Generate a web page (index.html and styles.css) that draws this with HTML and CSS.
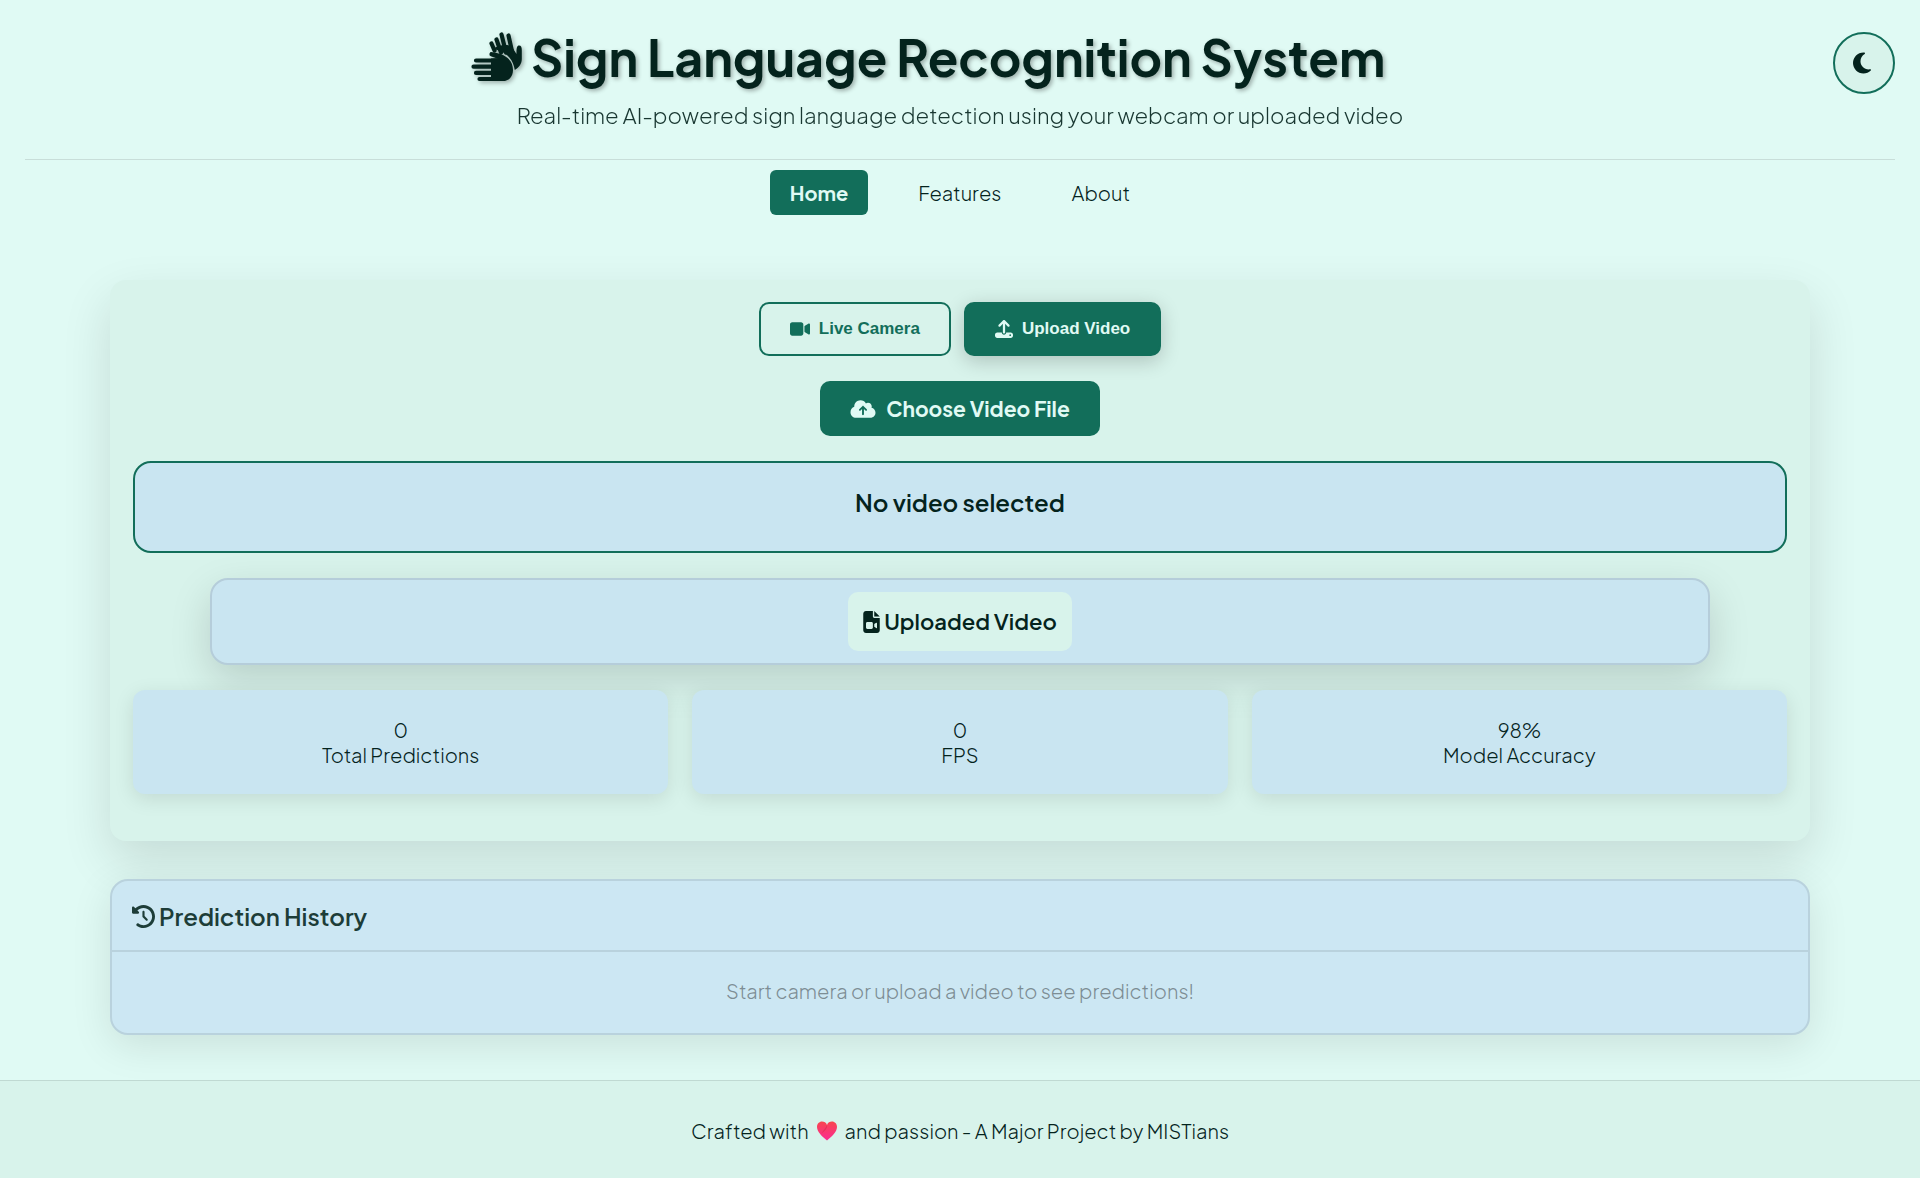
FILE: index.html
```html
<!DOCTYPE html>
<html lang="en">
<head>
<meta charset="utf-8">
<meta name="viewport" content="width=device-width, initial-scale=1">
<title>Sign Language Recognition System</title>
<link rel="stylesheet" href="styles.css">
</head>
<body>
<header class="header">
  <div class="brand">
    <h1 class="title">
      <svg class="icon-hands" viewBox="0 0 52 52" aria-hidden="true">
        <g fill="none" stroke="currentColor" stroke-linecap="round" stroke-width="4.200">
          <path d="M20.500 12.500l3 7M25.500 8.500l4.500 13M30.500 3.500l4.500 18M37.500 4.500l4 18"/>
          <path d="M5 29.500h20M2.500 35.700h20M5 41.900h20M8.500 48h20"/>
          <path d="M20.500 23.200l7 2.500"/>
        </g>
        <path fill="currentColor" d="M21 21.200c10 .8 21 5.800 21 17.800 0 7-4.500 11.100-10 11.100H20V27.500l8-.5z"/>
        <path fill="currentColor" d="M22 18c4-3 14-6 19-2l4.500 7c-.2-5 .2-8.500 2.500-8.500s2.800 2 2.800 4.500v9c0 5-3 8.500-7 11C42 27 34 20 22 18z"/>
      </svg>
      <span>Sign Language Recognition System</span>
    </h1>
    <p class="subtitle">Real-time AI-powered sign language detection using your webcam or uploaded video</p>
  </div>
  <button class="theme-toggle" type="button" aria-label="Toggle dark mode">
    <svg class="icon-moon" viewBox="0 0 384 512" aria-hidden="true"><path fill="currentColor" d="M223.500 32C100 32 0 132.300 0 256S100 480 223.500 480c60.600 0 115.500-24.200 155.800-63.400c5-4.900 6.300-12.500 3.100-18.700s-10.100-9.700-17-8.500c-9.800 1.700-19.800 2.600-30.100 2.600c-96.900 0-175.500-78.800-175.500-176c0-65.800 36-123.100 89.300-153.300c6.100-3.500 9.200-10.500 7.700-17.300s-7.300-11.900-14.300-12.500c-6.300-.5-12.600-.8-19-.8z"/></svg>
  </button>
</header>
<nav class="nav" aria-label="Main">
  <a class="nav-link active" href="#home">Home</a>
  <a class="nav-link" href="#features">Features</a>
  <a class="nav-link" href="#about">About</a>
</nav>
<main class="main">
  <section class="panel">
    <div class="modes">
      <button class="mode" type="button"><svg class="icon-video" viewBox="0 0 576 512" aria-hidden="true"><path fill="currentColor" d="M0 128C0 92.700 28.700 64 64 64H320c35.300 0 64 28.700 64 64V384c0 35.300-28.700 64-64 64H64c-35.300 0-64-28.700-64-64V128zM559.100 99.800c10.400 5.600 16.900 16.400 16.900 28.200V384c0 11.800-6.500 22.600-16.900 28.200s-23 5-32.900-1.600l-96-64L416 337.100V174.900l14.200-9.500 96-64c9.800-6.500 22.400-7.200 32.900-1.600z"/></svg>Live Camera</button>
      <button class="mode selected" type="button"><svg class="icon-upload" viewBox="0 0 512 512" aria-hidden="true"><path fill="currentColor" fill-rule="evenodd" d="M288 109.300V352c0 17.700-14.300 32-32 32s-32-14.300-32-32V109.300l-73.400 73.400c-12.500 12.500-32.800 12.500-45.300 0s-12.500-32.800 0-45.300l128-128c12.500-12.500 32.800-12.500 45.300 0l128 128c12.500 12.500 12.500 32.800 0 45.300s-32.800 12.500-45.300 0zM64 352h128c0 35.300 28.700 64 64 64s64-28.700 64-64h128c35.300 0 64 28.700 64 64v32c0 35.300-28.700 64-64 64H64c-35.300 0-64-28.700-64-64v-32c0-35.300 28.700-64 64-64zM432 456a24 24 0 1 0 0-48 24 24 0 1 0 0 48z"/></svg>Upload Video</button>
    </div>
    <button class="choose" type="button"><svg class="icon-cloud" viewBox="0 0 640 512" aria-hidden="true"><path fill="currentColor" fill-rule="evenodd" d="M144 480C64.500 480 0 415.500 0 336c0-62.800 40.200-116.200 96.200-135.900c-.1-2.700-.2-5.400-.2-8.100c0-88.400 71.600-160 160-160c59.300 0 111 32.200 138.700 80.200C409.900 102 428.300 96 448 96c53 0 96 43 96 96c0 12.200-2.300 23.800-6.400 34.600C596 238.400 640 290.100 640 352c0 70.700-57.300 128-128 128H144zm79-217c-9.400 9.400-9.400 24.600 0 33.900s24.600 9.400 33.900 0l39-39V392c0 13.300 10.700 24 24 24s24-10.700 24-24V257.900l39 39c9.400 9.400 24.600 9.400 33.900 0s9.400-24.600 0-33.900l-80-80c-9.400-9.400-24.600-9.400-33.900 0l-80 80z"/></svg>Choose Video File</button>
    <div class="status">No video selected</div>
    <div class="preview">
      <h2 class="preview-label"><svg class="icon-file" viewBox="0 0 384 512" aria-hidden="true"><path fill="currentColor" fill-rule="evenodd" d="M64 0C28.700 0 0 28.700 0 64V448c0 35.300 28.700 64 64 64H320c35.300 0 64-28.700 64-64V160H256c-17.700 0-32-14.300-32-32V0zM256 0V128H384zM64 288c0-17.700 14.300-32 32-32h96c17.700 0 32 14.300 32 32v96c0 17.700-14.300 32-32 32H96c-17.700 0-32-14.300-32-32zM300.900 397.900L256 368V304l44.900-29.900c2-1.300 4.400-2.100 6.800-2.100c6.800 0 12.300 5.500 12.300 12.300V387.700c0 6.800-5.500 12.300-12.300 12.300c-2.400 0-4.800-.7-6.800-2.100z"/></svg>Uploaded Video</h2>
    </div>
    <div class="stats">
      <div class="stat"><div>0</div><div>Total Predictions</div></div>
      <div class="stat"><div>0</div><div>FPS</div></div>
      <div class="stat"><div>98%</div><div>Model Accuracy</div></div>
    </div>
  </section>
  <section class="history">
    <h2 class="history-title"><svg class="icon-history" viewBox="0 0 512 512" aria-hidden="true"><path fill="currentColor" d="M75 75L41 41C25.900 25.900 0 36.600 0 57.900V168c0 13.300 10.700 24 24 24H134.100c21.400 0 32.100-25.900 17-41l-30.800-30.800C155 85.500 203 64 256 64c106 0 192 86 192 192s-86 192-192 192c-40.800 0-78.600-12.700-109.700-34.400c-14.500-10.100-34.400-6.600-44.600 7.900s-6.600 34.400 7.900 44.600C151.200 495 201.700 512 256 512c141.400 0 256-114.600 256-256S397.400 0 256 0C185.300 0 121.300 28.700 75 75zm181 53c-13.300 0-24 10.700-24 24V256c0 6.400 2.500 12.500 7 17l72 72c9.400 9.400 24.600 9.400 33.900 0s9.400-24.600 0-33.900l-65-65V152c0-13.300-10.700-24-24-24z"/></svg>Prediction History</h2>
    <p class="history-empty">Start camera or upload a video to see predictions!</p>
  </section>
</main>
<footer class="footer">
  <p class="credit">Crafted with
    <svg class="icon-heart" viewBox="0 0 18 18" role="img" aria-label="love">
      <defs><linearGradient id="love" x1="0" y1="0" x2="0" y2="1"><stop offset="0" stop-color="#f8454f"/><stop offset="1" stop-color="#fb2c92"/></linearGradient></defs>
      <path fill="url(#love)" d="M9 17.500C5 14.500 0 10 0 5.500 0 2.500 2 .5 4.500.5 6.500.5 8.200 1.500 9 3.500 9.800 1.500 11.500.5 13.500.5 16 .5 18 2.500 18 5.500 18 10 13 14.500 9 17.500z"/>
      <path fill="#d92a4e" opacity=".6" d="M9 3.500C9.800 6 7 9 4 11 6 8 8 6 9 3.500z"/>
    </svg>
    and passion - A Major Project by MISTians</p>
</footer>
</body>
</html>
```
FILE: styles.css
```css
:root {
  --bg: #e0faf4;
  --panel: #d8f3eb;
  --box: #c9e5f1;
  --green: #126e5a;
  --ink: #04231d;
  --line: #b5cdda;
}

* { box-sizing: border-box; }

body {
  margin: 0;
  min-height: 100vh;
  display: flex;
  flex-direction: column;
  background: var(--bg);
  color: var(--ink);
  font-family: "Plus Jakarta Sans", Inter, sans-serif;
  font-size: 20px;
  font-weight: 300;
  line-height: 25px;
}

h1, h2, p { margin: 0; }

button { font-family: inherit; cursor: pointer; }

svg { flex: none; }

.header {
  position: relative;
  margin: 0 25px;
  padding: 25px 0 30px;
  border-bottom: 1px solid #c8ded9;
  display: flex;
  justify-content: center;
}

.brand { display: flex; flex-direction: column; }

.title {
  display: flex;
  align-items: center;
  gap: 8px;
  align-self: center;
  margin-right: 64px;
  font-size: 50px;
  font-weight: 700;
  line-height: 64px;
  text-shadow: 2px 2px 4px rgba(0, 0, 0, 0.3);
}

.icon-hands {
  width: 52px;
  height: 52px;
  filter: drop-shadow(2px 2px 2px rgba(0, 0, 0, 0.3));
}

.subtitle {
  margin-top: 12px;
  font-size: 22px;
  line-height: 28px;
  text-align: center;
  opacity: 0.9;
}

.theme-toggle {
  position: absolute;
  top: 32px;
  right: 0;
  width: 62px;
  height: 62px;
  display: flex;
  align-items: center;
  padding: 0 0 0 18px;
  border: 2px solid var(--green);
  border-radius: 50%;
  background: var(--panel);
  color: var(--ink);
}

.icon-moon { width: 18px; height: 24px; }

.nav {
  display: flex;
  justify-content: center;
  gap: 30px;
  padding: 10px 20px;
}

.nav-link {
  padding: 10px 20px;
  border-radius: 6px;
  color: var(--ink);
  text-decoration: none;
}

.nav-link.active {
  background: var(--green);
  color: var(--bg);
  font-weight: 700;
}

.main {
  width: 100%;
  max-width: 1740px;
  margin: 0 auto;
  padding: 55px 20px 45px;
}

.panel {
  display: flex;
  flex-direction: column;
  align-items: center;
  gap: 25px;
  padding: 22px 23px 47px;
  border-radius: 16px;
  background: var(--panel);
  box-shadow: 0 20px 50px rgba(0, 0, 0, 0.12);
}

.modes { display: flex; gap: 13px; }

.mode {
  display: flex;
  align-items: center;
  gap: 9px;
  height: 54px;
  padding: 0 29px;
  border: 2px solid var(--green);
  border-radius: 10px;
  background: transparent;
  color: var(--green);
  font: 700 17px/20px "Liberation Sans", Arial, sans-serif;
}

.mode.selected {
  background: var(--green);
  color: var(--bg);
  box-shadow: 0 5px 20px rgba(0, 0, 0, 0.2);
}

.icon-video { width: 20px; height: 18px; }
.icon-upload { width: 18px; height: 18px; }
.icon-cloud { width: 26px; height: 20px; }
.icon-file { width: 17px; height: 22px; }
.icon-history { width: 23px; height: 23px; }

.choose {
  display: flex;
  align-items: center;
  gap: 10px;
  height: 55px;
  padding: 0 30px;
  border: 0;
  border-radius: 10px;
  background: var(--green);
  color: var(--bg);
  font-size: 21px;
  font-weight: 700;
}

.status {
  align-self: stretch;
  padding: 25px 20px 35px;
  border: 2px solid var(--green);
  border-radius: 18px;
  background: var(--box);
  font-size: 24px;
  font-weight: 600;
  line-height: 28px;
  text-align: center;
}

.preview {
  width: 100%;
  max-width: 1500px;
  display: flex;
  justify-content: center;
  padding: 12px;
  border: 2px solid var(--line);
  border-radius: 18px;
  background: var(--box);
  box-shadow: 0 15px 40px rgba(0, 0, 0, 0.15);
}

.preview-label {
  display: flex;
  align-items: center;
  gap: 4px;
  padding: 15px;
  border-radius: 10px;
  background: var(--panel);
  font-size: 22px;
  font-weight: 600;
  line-height: 29px;
}

.stats {
  align-self: stretch;
  display: grid;
  grid-template-columns: repeat(3, 1fr);
  gap: 24px;
}

.stat {
  padding: 27px 20px;
  border-radius: 12px;
  background: var(--box);
  box-shadow: 0 5px 20px rgba(0, 0, 0, 0.1);
  text-align: center;
}

.history {
  margin-top: 38px;
  border: 2px solid #b9d2dd;
  border-radius: 18px;
  background: #cce7f3;
  box-shadow: 0 10px 40px rgba(0, 0, 0, 0.1);
}

.history-title {
  display: flex;
  align-items: center;
  gap: 4px;
  padding: 21px 20px 20px;
  border-bottom: 2px solid #b9d2dd;
  color: #1d3d38;
  font-size: 24px;
  font-weight: 600;
  line-height: 28px;
}

.history-empty {
  padding: 26px 20px 30px;
  color: #7d8d94;
  text-align: center;
}

.footer {
  flex: 1;
  padding: 37px 20px 34px;
  border-top: 1px solid #c0d9d2;
  background: var(--panel);
  text-align: center;
}

.credit {
  display: flex;
  justify-content: center;
  align-items: center;
  gap: 8px;
}

.icon-heart { width: 20px; height: 20px; }
```
